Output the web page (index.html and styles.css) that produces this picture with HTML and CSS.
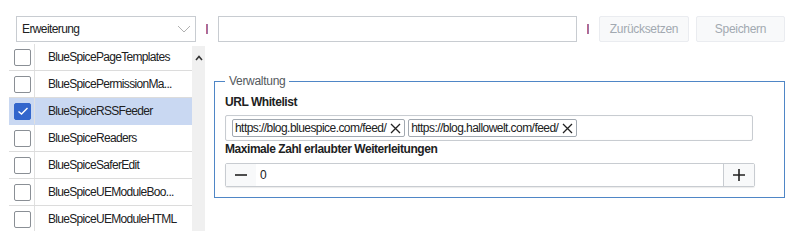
FILE: index.html
```html
<!DOCTYPE html>
<html>
<head>
<meta charset="utf-8">
<link rel="stylesheet" href="styles.css">
</head>
<body>
<div class="page">
  <div class="toolbar">
    <div class="select">
      <span>Erweiterung</span>
      <svg class="chev" width="14" height="8" viewBox="0 0 14 8"><path d="M1 1 L7 7 L13 1" fill="none" stroke="#b0b0b0" stroke-width="1"/></svg>
    </div>
    <span class="sep"></span>
    <div class="search"></div>
    <span class="sep"></span>
    <div class="btn btn-reset">Zurücksetzen</div>
    <div class="btn btn-save">Speichern</div>
  </div>
  <div class="main">
    <div class="listwrap">
      <div class="list">
        <div class="row"><span class="cbcell"><span class="cb"></span></span><span class="name">BlueSpicePageTemplates</span></div>
        <div class="row"><span class="cbcell"><span class="cb"></span></span><span class="name">BlueSpicePermissionMa...</span></div>
        <div class="row sel"><span class="cbcell"><span class="cb on"><svg width="12" height="10" viewBox="0 0 12 10"><path d="M1.5 5.5 L4.5 8 L10.5 2" fill="none" stroke="#fff" stroke-width="1.4"/></svg></span></span><span class="name">BlueSpiceRSSFeeder</span></div>
        <div class="row"><span class="cbcell"><span class="cb"></span></span><span class="name">BlueSpiceReaders</span></div>
        <div class="row"><span class="cbcell"><span class="cb"></span></span><span class="name">BlueSpiceSaferEdit</span></div>
        <div class="row"><span class="cbcell"><span class="cb"></span></span><span class="name">BlueSpiceUEModuleBoo...</span></div>
        <div class="row"><span class="cbcell"><span class="cb"></span></span><span class="name">BlueSpiceUEModuleHTML</span></div>
      </div>
      <div class="scrollbar">
        <svg width="8" height="6" viewBox="0 0 8 6"><path d="M1 5 L4 1.5 L7 5" fill="none" stroke="#333" stroke-width="1.6"/></svg>
      </div>
    </div>
    <fieldset class="box">
      <legend>Verwaltung</legend>
      <div class="label">URL Whitelist</div>
      <div class="tags">
        <span class="tag">https://blog.bluespice.com/feed/<svg width="11" height="11" viewBox="0 0 11 11"><path d="M1 1 L10 10 M10 1 L1 10" stroke="#222" stroke-width="1.3"/></svg></span>
        <span class="tag">https://blog.hallowelt.com/feed/<svg width="11" height="11" viewBox="0 0 11 11"><path d="M1 1 L10 10 M10 1 L1 10" stroke="#222" stroke-width="1.3"/></svg></span>
      </div>
      <div class="label">Maximale Zahl erlaubter Weiterleitungen</div>
      <div class="num">
        <span class="nbtn minus"><svg width="12" height="12" viewBox="0 0 12 12"><path d="M0 6 H12" stroke="#222" stroke-width="1.6"/></svg></span>
        <span class="nval">0</span>
        <span class="nbtn plus"><svg width="12" height="12" viewBox="0 0 12 12"><path d="M0 6 H12 M6 0 V12" stroke="#222" stroke-width="1.6"/></svg></span>
      </div>
    </fieldset>
  </div>
</div>
</body>
</html>
```
FILE: styles.css
```css
html, body {
  margin: 0;
  padding: 0;
  background: #fff;
}
body {
  font-family: "Liberation Sans", Arial, sans-serif;
  font-size: 12px;
  color: #202122;
  width: 799px;
  height: 231px;
  overflow: hidden;
}
.toolbar {
  display: flex;
  align-items: center;
  height: 26px;
  margin: 16px 0 0 16px;
}
.select {
  box-sizing: border-box;
  width: 180px;
  height: 26px;
  border: 1px solid #c8ccd1;
  display: flex;
  align-items: center;
  justify-content: space-between;
  padding: 0 4px 0 5px;
  font-size: 12px;
  letter-spacing: -0.6px;
}
.sep {
  width: 2px;
  height: 10px;
  background: linear-gradient(90deg, #d0607a, #8a7ab8);
  margin: 0 11px 0 10px;
}
.search {
  box-sizing: border-box;
  width: 359px;
  height: 26px;
  border: 1px solid #c8ccd1;
  margin-left: -1px;
}
.btn {
  box-sizing: border-box;
  height: 26px;
  display: flex;
  align-items: center;
  justify-content: center;
  background: #f8f9fa;
  border: 1px solid #eaecf0;
  border-radius: 2px;
  color: #a2a9b1;
  font-size: 12px;
  letter-spacing: -0.3px;
}
.btn-reset { width: 90px; margin-left: -1px; }
.btn-save { width: 89px; margin-left: 7px; }
.main {
  display: flex;
  align-items: flex-start;
  margin-top: 1px;
}
.listwrap {
  display: flex;
  margin-left: 9px;
  width: 196px;
  height: 189px;
}
.list {
  width: 183px;
  padding-top: 1px;
}
.row {
  display: flex;
  align-items: center;
  height: 27px;
  box-sizing: border-box;
  border-bottom: 1px solid #dcdcdc;
}
.row.sel {
  background: #c9d8f2;
  border-bottom-color: #c9d8f2;
}
.cbcell {
  width: 26px;
  height: 100%;
  box-sizing: border-box;
  border-right: 1px solid #e0e0e0;
  display: flex;
  align-items: center;
  padding-left: 5px;
}
.cb {
  box-sizing: border-box;
  width: 17px;
  height: 17px;
  border: 1px solid #8a8f95;
  border-radius: 2px;
  background: #fff;
  display: flex;
  align-items: center;
  justify-content: center;
}
.cb.on {
  background: #3366cc;
  border-color: #3366cc;
}
.name {
  margin-left: 13px;
  font-size: 12px;
  letter-spacing: -0.68px;
  white-space: nowrap;
}
.scrollbar {
  width: 13px;
  margin-top: 3px;
  background: #f0f0f0;
  display: flex;
  justify-content: center;
  padding-top: 9px;
  box-sizing: border-box;
}
.scrollbar svg { display: block; }
.box {
  box-sizing: border-box;
  width: 571px;
  height: 124px;
  margin: 31px 0 0 9px;
  border: 1px solid #4f86c6;
  padding: 6px 10px 10px 10px;
}
.box legend {
  padding: 0 4px;
  color: #54595d;
  font-size: 12px;
  letter-spacing: -0.3px;
  line-height: 14px;
}
.label {
  font-weight: bold;
  font-size: 12px;
  line-height: 16px;
  letter-spacing: -0.45px;
}
.tags {
  box-sizing: border-box;
  width: 528px;
  height: 26px;
  margin-top: 5px;
  border: 1px solid #c8ccd1;
  border-radius: 2px;
  box-shadow: inset 0 0 1px rgba(0,0,0,0.1);
  display: flex;
  align-items: center;
  padding-left: 6px;
  gap: 3px;
}
.tag {
  box-sizing: border-box;
  height: 18px;
  border: 1px solid #a2a9b1;
  border-radius: 2px;
  display: flex;
  align-items: center;
  padding: 0 3px 0 2px;
  font-size: 12px;
  letter-spacing: -0.55px;
  gap: 4px;
}
.num {
  box-sizing: border-box;
  width: 530px;
  height: 24px;
  margin-top: 6px;
  border: 1px solid #c8ccd1;
  border-radius: 2px;
  box-shadow: 0 1px 1px rgba(0,0,0,0.08);
  display: flex;
  align-items: stretch;
}
.nbtn {
  width: 30px;
  background: #f8f9fa;
  display: flex;
  align-items: center;
  justify-content: center;
}
.plus {
  border-left: 1px solid #c8ccd1;
}
.nval {
  flex: 1;
  display: flex;
  align-items: center;
  padding-left: 4px;
  font-size: 12px;
}
```
